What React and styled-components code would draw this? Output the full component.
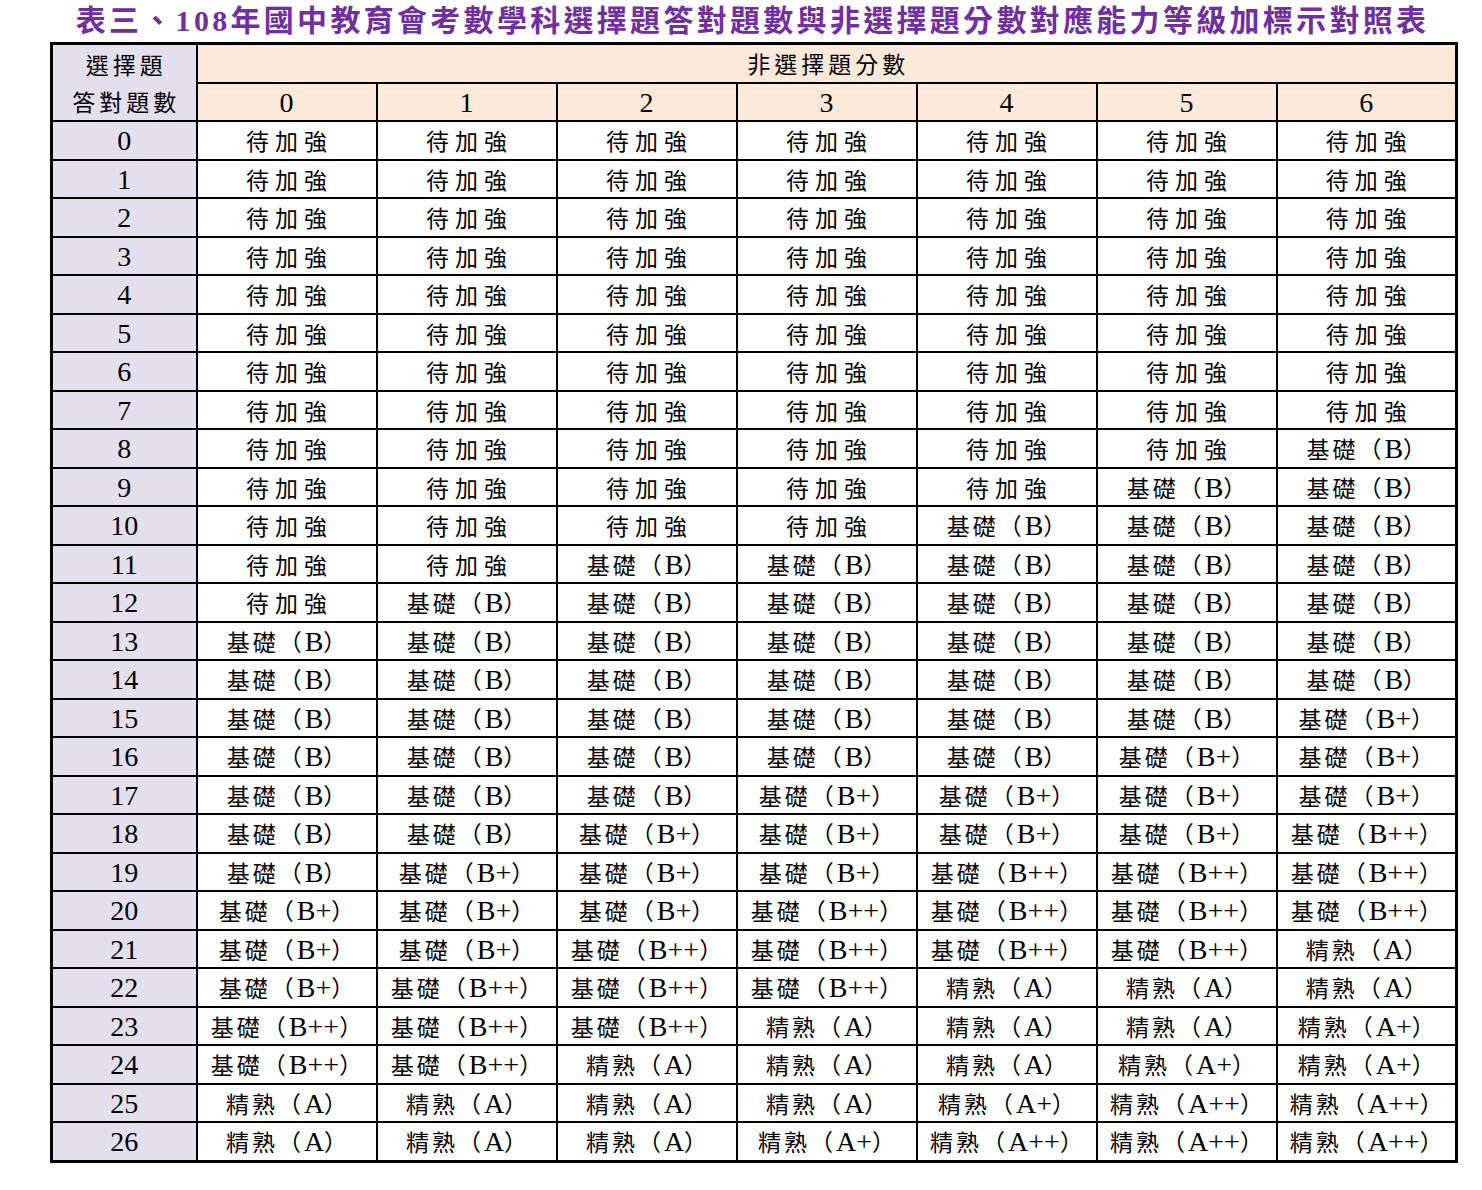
import React from "react";
import styled, { createGlobalStyle } from "styled-components";

const GlobalStyle = createGlobalStyle`
  html, body { margin: 0; padding: 0; background: #ffffff; }
  body { font-family: "Liberation Serif", "Noto Sans CJK TC", serif; color: #000; }
`;

const Page = styled.div`
  width: 1405px;
  padding-left: 50px;
`;

const Title = styled.h1`
  margin: 0;
  height: 42px;
  line-height: 42px;
  text-align: center;
  font-family: "Liberation Serif", "Noto Sans CJK TC", serif;
  font-size: 30px;
  font-weight: 700;
  letter-spacing: 3.3px;
  color: #7030a0;
  white-space: nowrap;
`;

const Table = styled.table`
  width: 1405px;
  border-collapse: collapse;
  table-layout: fixed;
  border: 3px solid #000;
`;

const Cell = styled.td`
  border: 2px solid #000;
  padding: 0;
  height: ${(p) => (p.$h ? `${p.$h - 2}px` : "auto")};
  text-align: center;
  vertical-align: middle;
  white-space: nowrap;
  font-family: "Noto Sans CJK TC", sans-serif;
  font-size: 23px;
  font-weight: 400;
  line-height: 35px;
  background: ${(p) =>
    p.$kind === "head" ? "#fde9d9" : p.$kind === "side" ? "#e4dfec" : "#ffffff"};
`;

const HeadCorner = styled(Cell)`
  line-height: 37px;
`;

const Label = styled.span`
  letter-spacing: ${(p) => p.$ls}px;
  margin-right: ${(p) => -p.$ls}px;
`;

const Latin = styled.span`
  font-family: "Liberation Serif", serif;
  font-size: 28px;
  letter-spacing: 0;
`;

const levels = [
  [0, 0, 0, 0, 0, 0, 0],
  [0, 0, 0, 0, 0, 0, 0],
  [0, 0, 0, 0, 0, 0, 0],
  [0, 0, 0, 0, 0, 0, 0],
  [0, 0, 0, 0, 0, 0, 0],
  [0, 0, 0, 0, 0, 0, 0],
  [0, 0, 0, 0, 0, 0, 0],
  [0, 0, 0, 0, 0, 0, 0],
  [0, 0, 0, 0, 0, 0, 1],
  [0, 0, 0, 0, 0, 1, 1],
  [0, 0, 0, 0, 1, 1, 1],
  [0, 0, 1, 1, 1, 1, 1],
  [0, 1, 1, 1, 1, 1, 1],
  [1, 1, 1, 1, 1, 1, 1],
  [1, 1, 1, 1, 1, 1, 1],
  [1, 1, 1, 1, 1, 1, 2],
  [1, 1, 1, 1, 1, 2, 2],
  [1, 1, 1, 2, 2, 2, 2],
  [1, 1, 2, 2, 2, 2, 3],
  [1, 2, 2, 2, 3, 3, 3],
  [2, 2, 2, 3, 3, 3, 3],
  [2, 2, 3, 3, 3, 3, 4],
  [2, 3, 3, 3, 4, 4, 4],
  [3, 3, 3, 4, 4, 4, 5],
  [3, 3, 4, 4, 4, 5, 5],
  [4, 4, 4, 4, 5, 6, 6],
  [4, 4, 4, 5, 6, 6, 6],
];

const grades = [null, "B", "B+", "B++", "A", "A+", "A++"];
const columns = [0, 1, 2, 3, 4, 5, 6];

const PITCH = 1117 / 29;
const rowHeight = (i) => Math.round((i + 1) * PITCH) - Math.round(i * PITCH);

function Level({ v }) {
  if (v === 0) return <Label $ls={6}>待加強</Label>;
  const word = v <= 3 ? "基礎" : "精熟";
  return (
    <Label $ls={3}>
      {word}（<Latin>{grades[v]}</Latin>）
    </Label>
  );
}

export default function App() {
  return (
    <Page>
      <GlobalStyle />
      <Title>
        表三、108年國中教育會考數學科選擇題答對題數與非選擇題分數對應能力等級加標示對照表
      </Title>
      <Table>
        <colgroup>
          <col style={{ width: 145 }} />
          {columns.map((i) => (
            <col key={i} style={{ width: 180 }} />
          ))}
        </colgroup>
        <thead>
          <tr>
            <HeadCorner as="th" rowSpan={2} $kind="side">
              <Label $ls={4}>選擇題</Label>
              <br />
              <Label $ls={4}>答對題數</Label>
            </HeadCorner>
            <Cell as="th" colSpan={7} $kind="head" $h={rowHeight(0)}>
              <Label $ls={4}>非選擇題分數</Label>
            </Cell>
          </tr>
          <tr>
            {columns.map((i) => (
              <Cell as="th" key={i} $kind="head" $h={rowHeight(1)}>
                <Latin>{i}</Latin>
              </Cell>
            ))}
          </tr>
        </thead>
        <tbody>
          {levels.map((row, r) => (
            <tr key={r}>
              <Cell $kind="side" $h={rowHeight(r + 2)}>
                <Latin>{r}</Latin>
              </Cell>
              {row.map((v, c) => (
                <Cell key={c} $h={rowHeight(r + 2)}>
                  <Level v={v} />
                </Cell>
              ))}
            </tr>
          ))}
        </tbody>
      </Table>
    </Page>
  );
}
